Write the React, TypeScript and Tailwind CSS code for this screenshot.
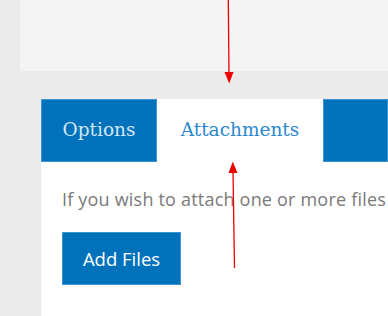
import React from "react";

const App: React.FC = () => {
  return (
    <div className="relative w-full h-[316px] overflow-hidden bg-[#ebebeb] font-['Open_Sans',sans-serif]">
      {/* Top panel */}
      <div className="ml-[20px] h-[71px] bg-[#f4f4f4]" />

      {/* Tabs + content */}
      <div className="ml-[41px] mt-[28px]">
        <div className="flex h-[63px] font-['DejaVu_Serif',serif] text-[18.5px]">
          <div className="w-[116px] flex items-center justify-center pb-[2px] bg-[#0072bb] border border-[#3d96d3] text-[#d2e6f4]">
            Options
          </div>
          <div className="w-[166px] flex items-center justify-center pb-[2px] bg-white text-[#2a88cf]">
            Attachments
          </div>
          <div className="flex-1 bg-[#0072bb] border border-[#3d96d3]" />
        </div>

        <div className="bg-white h-[160px] pl-[21px] pt-[25px]">
          <p className="text-[18px] tracking-[0.2px] leading-[24px] text-[#7a7a7a] whitespace-nowrap">
            If you wish to attach one or more files
          </p>
          <button className="mt-[21px] w-[119px] h-[53px] bg-[#0072bb] border border-[#3d96d3] text-white text-[18.5px]">
            Add Files
          </button>
        </div>
      </div>

      {/* Annotation arrows */}
      <svg className="absolute inset-0 pointer-events-none" width="388" height="316" viewBox="0 0 388 316">
        <line x1="228.3" y1="0" x2="229" y2="74" stroke="#ee0000" strokeWidth="1.3" />
        <polygon points="224.5,72 233.5,72 229.2,83.5" fill="#ee0000" />
        <line x1="234.5" y1="268" x2="233" y2="171" stroke="#ee0000" strokeWidth="1.3" />
        <polygon points="228.5,173 237.5,173 232.8,161.5" fill="#ee0000" />
      </svg>
    </div>
  );
};

export default App;
